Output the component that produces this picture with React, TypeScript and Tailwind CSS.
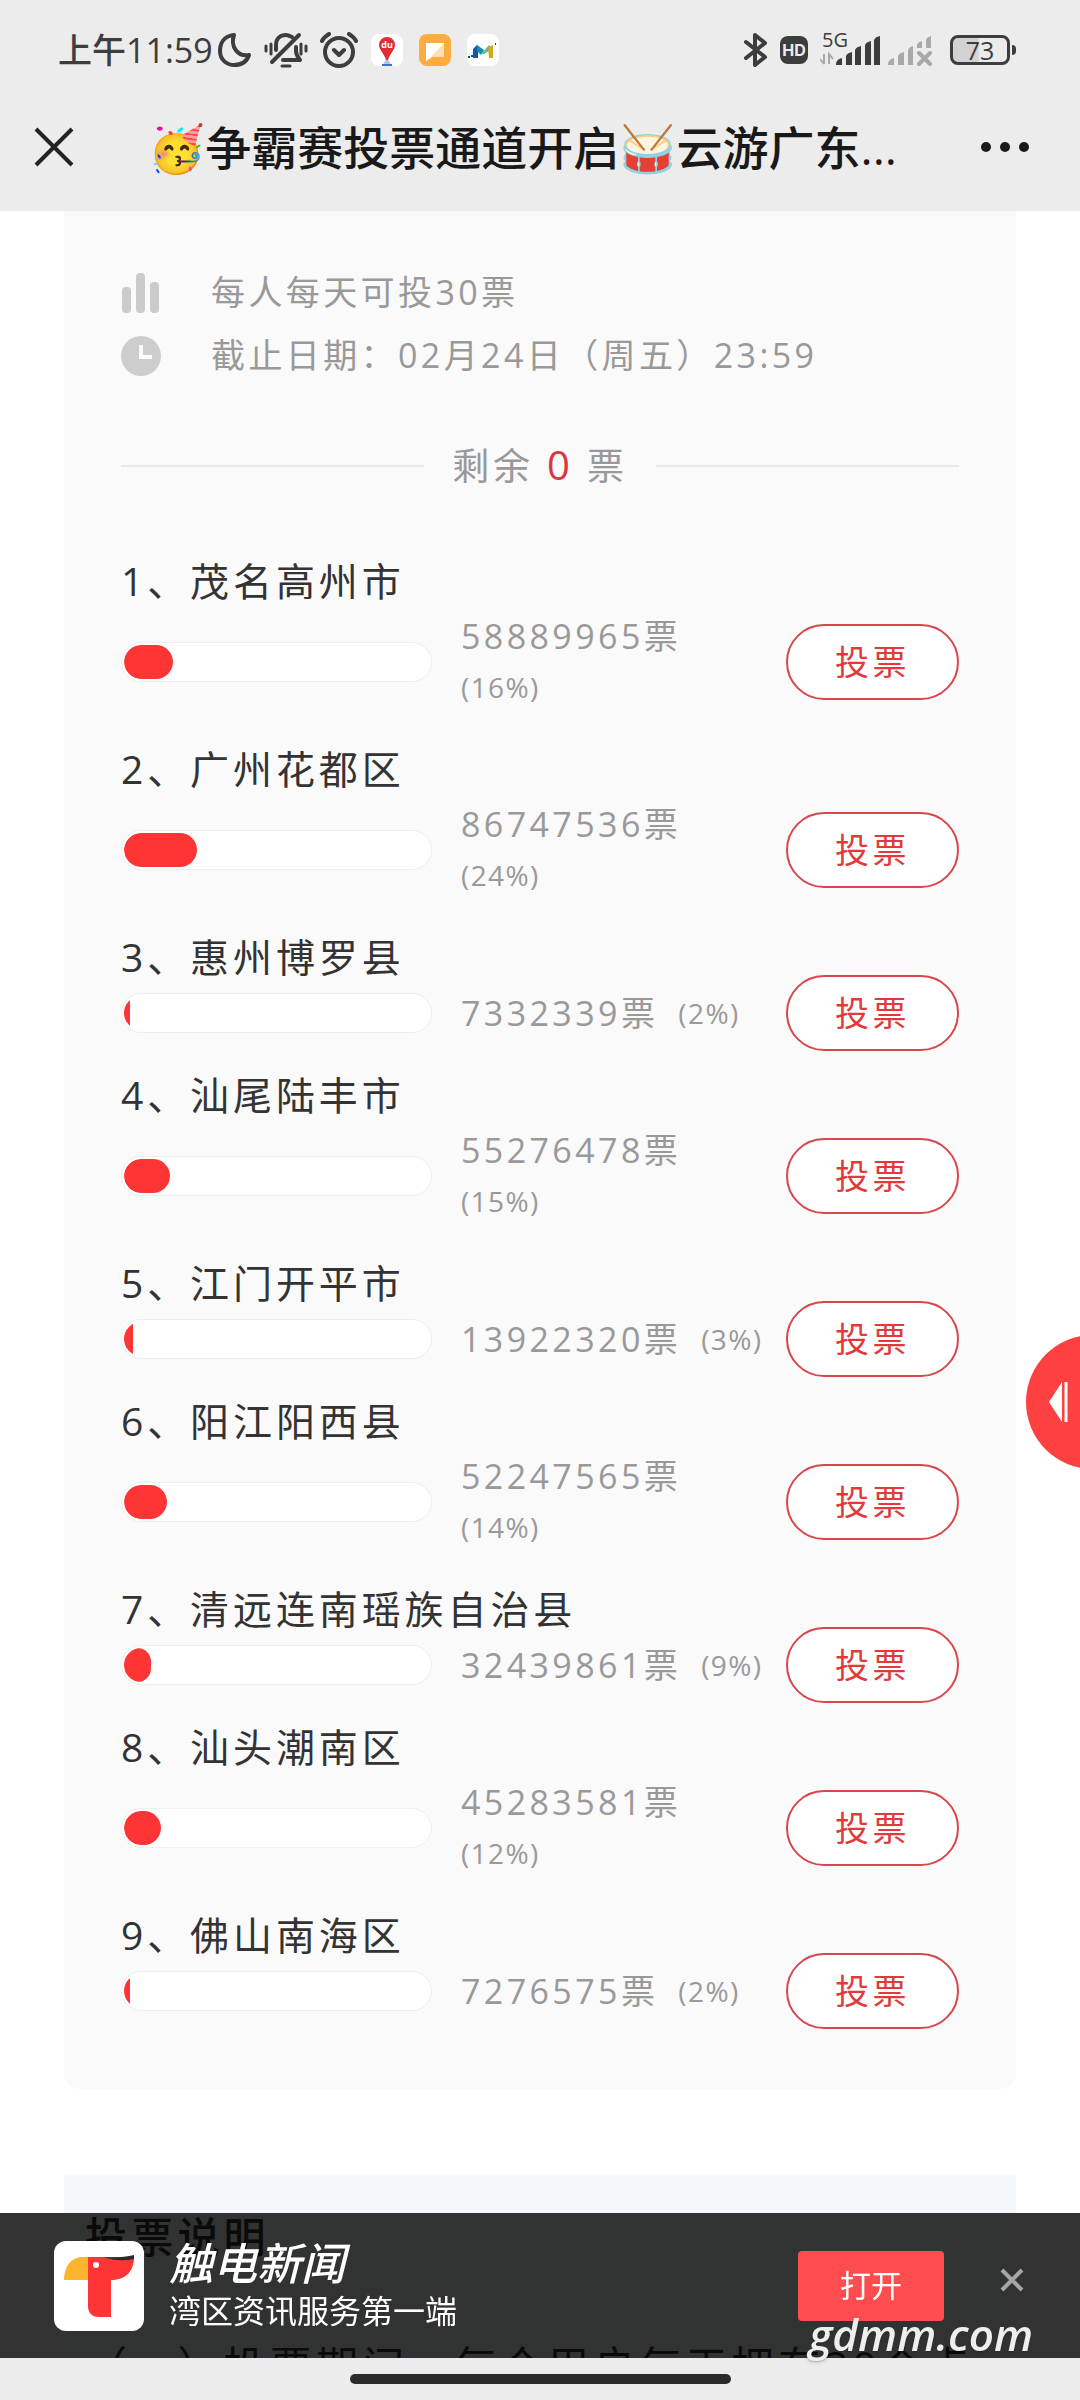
type Entry = { name: string; votes: number; percent: number };

const entries: Entry[] = [
  { name: "茂名高州市", votes: 58889965, percent: 16 },
  { name: "广州花都区", votes: 86747536, percent: 24 },
  { name: "惠州博罗县", votes: 7332339, percent: 2 },
  { name: "汕尾陆丰市", votes: 55276478, percent: 15 },
  { name: "江门开平市", votes: 13922320, percent: 3 },
  { name: "阳江阳西县", votes: 52247565, percent: 14 },
  { name: "清远连南瑶族自治县", votes: 32439861, percent: 9 },
  { name: "汕头潮南区", votes: 45283581, percent: 12 },
  { name: "佛山南海区", votes: 7276575, percent: 2 },
];

function MoonIcon() {
  return (
    <svg className="h-9 w-9" viewBox="0 0 36 36" fill="none" stroke="#3d3d3d" strokeWidth="4" strokeLinecap="round" strokeLinejoin="round">
      <path d="M17 3C7 4 3 11 3 19c0 9 7 14 14 14 8 0 13-4 15-10-11 2-19-8-15-20Z" />
    </svg>
  );
}

function BellOffIcon() {
  return (
    <svg className="h-9 w-11" viewBox="0 0 44 36" fill="none" stroke="#3d3d3d" strokeWidth="4" strokeLinecap="round" strokeLinejoin="round">
      <path d="M12 18v-5c0-6 4-10 10-10 2 0 4 1 6 2M32 15v4c0 4 2 6 4 9H19" />
      <path d="M35 3 8 30" />
      <path d="M18 34h8" strokeWidth="3" />
      <path d="M2 14v5M7 12v10M37 12v10M42 14v5" strokeWidth="3" />
    </svg>
  );
}

function AlarmIcon() {
  return (
    <svg className="h-9 w-10" viewBox="0 0 40 36" fill="none" stroke="#3d3d3d" strokeWidth="4" strokeLinecap="round" strokeLinejoin="round">
      <circle cx="20" cy="20" r="14" />
      <path d="m15 18 5 5 5-5M3 9c1-3 4-5 7-7M37 9c-1-3-4-5-7-7" />
    </svg>
  );
}

function MapAppIcon() {
  return (
    <svg className="h-8 w-8" viewBox="0 0 32 32">
      <rect width="32" height="32" rx="8" fill="#fff" />
      <path d="m16 24-5 8h10Z" fill="#a9c8ee" />
      <path d="M11 30h10v2H11Z" fill="#3f72c4" />
      <path d="M16 3a8 8 0 0 1 8 8c0 5-5 8-7 15h-2C13 19 8 16 8 11a8 8 0 0 1 8-8Z" fill="#e22b33" />
      <text x="16" y="14" textAnchor="middle" fontSize="9" fontWeight="700" fill="#fff" fontFamily="Open Sans, sans-serif">du</text>
    </svg>
  );
}

function NoteAppIcon() {
  return (
    <svg className="h-8 w-8" viewBox="0 0 32 32">
      <rect width="32" height="32" rx="8" fill="#fdac40" />
      <path d="M7 9h18v14H13l-6 4Z" fill="#fff" />
      <path d="M25 9v14H12Z" fill="#fde0b5" />
    </svg>
  );
}

function MAppIcon() {
  return (
    <svg className="h-8 w-8" viewBox="0 0 32 32" fill="none">
      <rect width="32" height="32" rx="8" fill="#fff" />
      <path d="M6 24V15l4-4 3 3-2 4v6Z" fill="#1556a0" />
      <path d="m10 11 7 5-3 5-4-4Z" fill="#178dab" />
      <path d="m14 20 8-9 3 4-8 5Z" fill="#61b9a0" />
      <path d="m21 13 5-2v13h-4Z" fill="#d9a51c" />
      <path d="M1 23h2M4 22h2M28 10h1" stroke="#164a80" strokeWidth="2" />
    </svg>
  );
}

function BluetoothIcon() {
  return (
    <svg className="h-9 w-6" viewBox="0 0 24 36" fill="none" stroke="#3d3d3d" strokeWidth="4" strokeLinecap="round" strokeLinejoin="round">
      <path d="m2 10 19 15-10 8V3l10 8L2 26" />
    </svg>
  );
}

function SignalIcons() {
  return (
    <svg className="h-12 w-28" viewBox="0 -6 112 48">
      <text x="2" y="15" fontSize="20" fill="#3d3d3d" fontFamily="Open Sans, sans-serif">5G</text>
      <g stroke="#a9a9a9" strokeWidth="2" fill="none">
        <path d="M4 22v10M0 27l4 5M9 32V22l4 5" />
      </g>
      <g fill="#3d3d3d">
        <path d="M16 33c0-4 2-6 6-7v7Z" />
        <path d="M26 33V24q1-3 6-4v13Z" />
        <path d="M35 33V18q1-3 6-4v19Z" />
        <path d="M45 33V13q1-3 6-4v24Z" />
        <path d="M54 33V8q1-3 6-4v29Z" />
      </g>
      <g fill="#a9a9a9">
        <path d="M68 33c0-4 2-6 6-7v7Z" />
        <path d="M78 33V24q1-3 6-4v13Z" />
        <path d="M88 33V18q1-3 5-4v19Z" />
        <path d="M97 16v-3q1-3 5-4v7Z" />
        <path d="M106 16V8q1-3 5-4v12Z" />
      </g>
      <path d="m99 21 11 11m0-11L99 32" stroke="#a9a9a9" strokeWidth="4" strokeLinecap="round" />
    </svg>
  );
}

function StatusBar() {
  return (
    <div className="flex h-[100px] items-center justify-between pr-16 pl-[58px] text-[#3d3d3d]">
      <div className="flex items-center">
        <time className="text-[34px] leading-none font-medium">上午11:59</time>
        <div className="ml-1 flex items-center gap-[11px]">
          <MoonIcon />
          <BellOffIcon />
          <AlarmIcon />
        </div>
        <div className="ml-3 flex items-center gap-4">
          <MapAppIcon />
          <NoteAppIcon />
          <MAppIcon />
        </div>
      </div>
      <div className="flex items-center">
        <BluetoothIcon />
        <span className="mr-3 ml-3 flex h-7 w-7 items-center justify-center rounded-lg bg-[#3d3d3d] font-['Inter'] text-base leading-none font-bold text-[#ececec]">HD</span>
        <SignalIcons />
        <div className="ml-[18px] flex items-center">
          <span className="flex h-[30px] w-[60px] items-center justify-center rounded-lg border-3 border-[#3d3d3d] bg-linear-to-r from-[#d2d2d2] from-45% to-[#ececec] to-50% text-[25px] leading-none">
            73
          </span>
          <span className="ml-0.5 h-2.5 w-1 rounded-r-sm bg-[#3d3d3d]" />
        </div>
      </div>
    </div>
  );
}

function NavBar() {
  return (
    <div className="flex h-[111px] items-center pb-[18px] text-[#191919]">
      <button type="button" aria-label="关闭" className="ml-[34px] shrink-0">
        <svg className="h-10 w-10" viewBox="0 0 40 40" stroke="#232323" strokeWidth="4">
          <path d="m2 2 36 36m0-36L2 38" />
        </svg>
      </button>
      <h1 className="ml-[74px] min-w-0 flex-1 truncate text-[46px] leading-[60px] font-medium">🥳争霸赛投票通道开启🥁云游广东...</h1>
      <button type="button" aria-label="更多" className="mr-[51px] ml-6 flex shrink-0 gap-[9px]">
        <span className="h-2.5 w-2.5 rounded-full bg-[#191919]" />
        <span className="h-2.5 w-2.5 rounded-full bg-[#191919]" />
        <span className="h-2.5 w-2.5 rounded-full bg-[#191919]" />
      </button>
    </div>
  );
}

function BarsIcon() {
  return (
    <svg className="h-10 w-10" viewBox="0 0 40 40" fill="#cbcbcb">
      <rect x="1" y="14" width="9" height="26" rx="4" />
      <rect x="15" y="0" width="9" height="40" rx="4" />
      <rect x="29" y="9" width="9" height="31" rx="4" />
    </svg>
  );
}

function ClockIcon() {
  return (
    <svg className="h-10 w-10" viewBox="0 0 40 40">
      <circle cx="20" cy="20" r="20" fill="#cdcdcd" />
      <path d="M20 9v12h11" stroke="#fafafa" strokeWidth="4" fill="none" />
    </svg>
  );
}

function VoteRow({ entry, rank }: { entry: Entry; rank: number }) {
  const fillShape = entry.percent > 5 ? "rounded-full" : "";
  return (
    <li className="mb-[26px]">
      <h2 className="text-[39px] leading-[60px] tracking-widest text-[#333]">
        {rank}、{entry.name}
      </h2>
      <div className="flex min-h-[52px] items-center">
        <div className="h-10 w-[311px] shrink-0 rounded-full border border-[#eee] bg-white p-0.5">
          <div className="h-full overflow-hidden rounded-full">
            <div className={`h-full bg-[#ff3434] ${fillShape}`} style={{ width: `${entry.percent}%` }} />
          </div>
        </div>
        <p className="ml-[29px] flex min-w-0 flex-1 flex-wrap items-center gap-x-5 text-[34px] leading-[51px] tracking-widest text-[#999]">
          <span>{entry.votes}票</span>
          <span className="text-[28px] tracking-wider">({entry.percent}%)</span>
        </p>
        <button type="button" className="-my-3 ml-2 h-[76px] w-[173px] shrink-0 rounded-full border-2 border-[#d9464c] bg-white text-[34px] tracking-widest text-[#e03a3a]">
          投票
        </button>
      </div>
    </li>
  );
}

function OpenAppBanner() {
  return (
    <div className="flex h-[145px] items-center bg-black/80 text-white">
      <svg className="ml-[54px] h-[90px] w-[90px] shrink-0" viewBox="0 0 90 90">
        <rect width="90" height="90" rx="12" fill="#fff" />
        <path d="M34 16v23H10C10 25 18 16 28 16Z" fill="#fdb52f" />
        <path d="M34 16h46c0 13-7 23-23 23v37H45c-8 0-11-5-11-11Z" fill="#ff3434" />
        <path d="M50 16c10 1 22 0 30-2v4c-10 2-20 2-30-2Z" fill="#2b2b2b" />
        <circle cx="42" cy="24" r="3" fill="#fff" />
      </svg>
      <div className="ml-[25px] min-w-0 flex-1 pb-0.5">
        <p className="text-[44px] leading-[52px] font-medium italic">触电新闻</p>
        <p className="text-[32px] leading-[44px]">湾区资讯服务第一端</p>
      </div>
      <button type="button" className="mr-14 h-[70px] w-[146px] shrink-0 rounded bg-[#ff4d4f] text-[31px] leading-none">打开</button>
      <button type="button" aria-label="关闭横幅" className="mr-14 mb-3 shrink-0">
        <svg className="h-6 w-6" viewBox="0 0 24 24" stroke="#a6a6a6" strokeWidth="4">
          <path d="m2 2 20 20m0-20L2 22" />
        </svg>
      </button>
    </div>
  );
}

export default function App() {
  return (
    <div className="flex min-h-screen flex-col bg-white font-['Open_Sans','Noto_Sans_CJK_SC','Noto_Color_Emoji',sans-serif]">
      <header className="bg-[#ececec]">
        <StatusBar />
        <NavBar />
      </header>

      <main className="flex flex-1 flex-col px-16">
        <section className="rounded-b-2xl bg-[#fafafa] px-[57px] pt-[50px] pb-[46px]">
          <div className="flex flex-col text-[34px] leading-[63px] tracking-widest text-[#999]">
            <p className="flex items-center gap-[50px]">
              <BarsIcon />
              每人每天可投30票
            </p>
            <p className="flex items-center gap-[50px]">
              <ClockIcon />
              截止日期：02月24日（周五）23:59
            </p>
          </div>

          <p className="mt-12 flex items-center gap-7 text-[37px] leading-[60px] tracking-widest text-[#999]">
            <span className="h-0.5 flex-1 bg-[#e8e8e8]" />
            <span>
              剩余 <span className="text-[40px] text-[#d9363e]">0</span> 票
            </span>
            <span className="h-0.5 flex-1 bg-[#e8e8e8]" />
          </p>

          <ol className="mt-[55px]">
            {entries.map((entry, index) => (
              <VoteRow key={entry.name} entry={entry} rank={index + 1} />
            ))}
          </ol>
        </section>

        <section className="mt-[86px] flex-1 bg-[#f4f8fb] px-[21px] pt-8 text-[42px] tracking-widest text-[#333]">
          <h2 className="leading-[60px] font-medium">投票说明</h2>
          <p className="mt-[69px] leading-[60px] whitespace-nowrap">（一）投票期间，每个用户每天拥有30个点</p>
        </section>
      </main>

      <button type="button" aria-label="展开侧栏" className="fixed top-[1335px] right-0 h-[134px] w-[54px] overflow-hidden">
        <svg className="h-full w-full" viewBox="0 0 54 134">
          <circle cx="67" cy="67" r="67" fill="#ff4040" />
          <path d="m23 67 13-20v40Z" fill="#fff" />
          <path d="M40 47v40" stroke="#fff" strokeWidth="3" />
        </svg>
      </button>

      <footer className="fixed inset-x-0 bottom-0">
        <OpenAppBanner />
        <div className="flex h-[42px] items-center justify-center bg-[#ececec]">
          <span className="h-2.5 w-[381px] rounded-full bg-[#2b2b2b]" />
        </div>
        <span className="absolute right-[47px] bottom-9 text-[44px] leading-[60px] font-semibold text-[#eee] italic text-shadow-md">gdmm.com</span>
      </footer>
    </div>
  );
}
